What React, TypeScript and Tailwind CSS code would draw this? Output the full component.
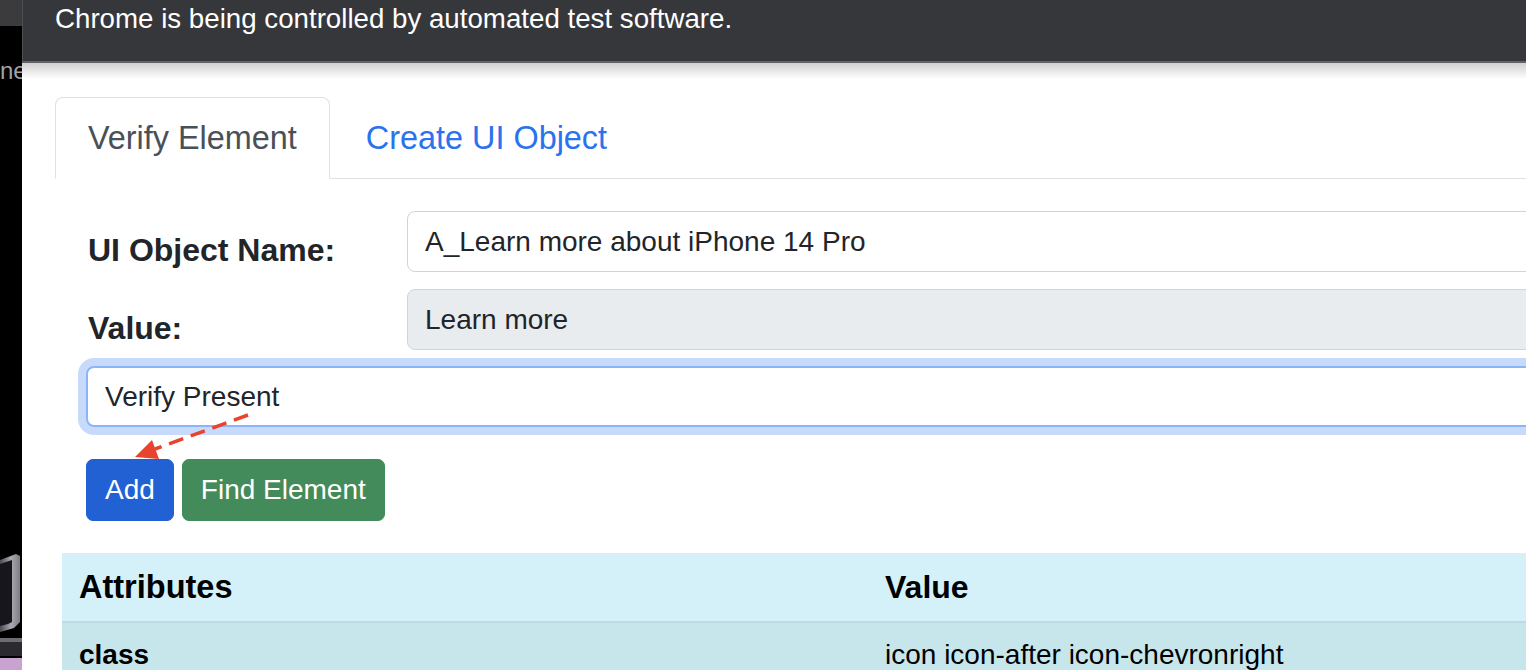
import React from "react";

const font = { fontFamily: '"Liberation Sans", Arial, sans-serif' };

function SideStrip() {
  return (
    <div className="w-[22px] shrink-0 bg-black flex flex-col overflow-hidden">
      <div className="h-[26px] bg-[#3b3b3e]" />
      <div className="mt-[30px] h-[30px] text-[24px] leading-[30px] text-[#a3a3a3] whitespace-nowrap">
        ne
      </div>
      <div className="flex-1" />
      <svg width="22" height="118" viewBox="0 0 22 118" className="block">
        <defs>
          <linearGradient id="bezel" x1="0" x2="1" y1="0" y2="0">
            <stop offset="0" stopColor="#4a4a50" />
            <stop offset="0.55" stopColor="#a9a9af" />
            <stop offset="1" stopColor="#7d7d83" />
          </linearGradient>
        </defs>
        <rect x="0" y="0" width="22" height="118" fill="#000" />
        <path d="M0 8 L16 2 L20 4 L20 70 L14 76 L0 80 Z" fill="url(#bezel)" />
        <path d="M0 12 L12 8 L12 70 L8 72 L0 74 Z" fill="#17161b" />
        <rect x="0" y="86" width="22" height="4" fill="#6c6c72" />
        <rect x="0" y="90" width="22" height="14" fill="#2a2a2f" />
        <rect x="0" y="106" width="22" height="12" fill="#c9a3cf" />
      </svg>
    </div>
  );
}

function FieldRow({
  label,
  value,
  readOnly,
}: {
  label: string;
  value: string;
  readOnly?: boolean;
}) {
  return (
    <div className="flex items-start">
      <div className="w-[319px] shrink-0 pt-[15px] text-[32px] leading-[48px] font-bold text-[#212529]">
        {label}
      </div>
      <div
        className={`flex-1 h-[61px] flex items-center px-[17px] border border-[#ced4da] rounded-[8px] text-[28px] text-[#212529] ${
          readOnly ? "bg-[#e9ecef]" : "bg-white"
        }`}
      >
        {value}
      </div>
    </div>
  );
}

function PointerArrow() {
  return (
    <svg
      width="122"
      height="52"
      viewBox="0 0 122 52"
      className="absolute left-[108px] top-[412px]"
    >
      <line
        x1="118"
        y1="3"
        x2="25"
        y2="37"
        stroke="#e8432c"
        strokeWidth="3.5"
        strokeDasharray="15 8"
      />
      <polygon points="5,45 22,28 29,47" fill="#e8432c" />
    </svg>
  );
}

export default function App() {
  return (
    <div className="w-[1526px] h-[670px] flex overflow-hidden bg-white" style={font}>
      <SideStrip />
      <div className="flex-1 flex flex-col overflow-hidden relative">
        <div className="h-[63px] shrink-0 bg-[#36373b] border-l border-[#4e4f53] border-b-2 border-b-[#626367] pl-[32px] pt-[3px] text-[27.7px] leading-[32px] text-white whitespace-nowrap">
          Chrome is being controlled by automated test software.
        </div>
        <div className="h-[16px] shrink-0 bg-gradient-to-b from-[#d0d0d0] to-white" />
        <div className="w-[1580px] shrink-0 pl-[33px] pt-[18px]">
          <ul className="flex border-b border-[#dee2e6]">
            <li className="-mb-px px-[32px] py-[16px] border border-[#dee2e6] border-b-white bg-white rounded-t-[8px] text-[32.4px] leading-[48px] text-[#495057]">
              Verify Element
            </li>
            <li className="-mb-px px-[35px] py-[16px] border border-transparent text-[32.4px] leading-[48px] text-[#2a72ee]">
              Create UI Object
            </li>
          </ul>

          <div className="pl-[33px] pt-[32px] flex flex-col gap-[15px]">
            <FieldRow label="UI Object Name:" value="A_Learn more about iPhone 14 Pro" />
            <FieldRow label="Value:" value="Learn more" readOnly />
          </div>

          <div className="pl-[31px] pt-[14px]">
            <div className="h-[61px] flex items-center px-[17px] border-2 border-[#8ab6f9] rounded-[8px] bg-white shadow-[0_0_0_8px_#c8dafb] text-[28px] text-[#212529]">
              Verify Present
            </div>
          </div>

          <div className="pl-[31px] pt-[32px] flex gap-[8px]">
            <button className="h-[62px] px-[18px] border border-[#2160d3] rounded-[7px] bg-[#2261d4] text-[28px] text-white">
              Add
            </button>
            <button className="h-[62px] px-[18px] border border-[#418a59] rounded-[7px] bg-[#438b5a] text-[28px] text-white">
              Find Element
            </button>
          </div>

          <div className="pl-[7px] pt-[32px]">
            <div className="grid grid-cols-[806px_1fr]">
              <div className="h-[70px] flex items-center px-[17px] bg-[#d4f1f9] border-b-2 border-[#bcdbe2] text-[32.5px] font-bold text-black">
                Attributes
              </div>
              <div className="h-[70px] flex items-center px-[17px] bg-[#d4f1f9] border-b-2 border-[#bcdbe2] text-[32px] font-bold text-black">
                Value
              </div>
              <div className="h-[64px] flex items-center px-[17px] bg-[#c7e6ec] text-[28px] font-bold text-black">
                class
              </div>
              <div className="h-[64px] flex items-center px-[17px] bg-[#c7e6ec] text-[28px] text-black">
                icon icon-after icon-chevronright
              </div>
            </div>
          </div>
        </div>
        <PointerArrow />
      </div>
    </div>
  );
}
